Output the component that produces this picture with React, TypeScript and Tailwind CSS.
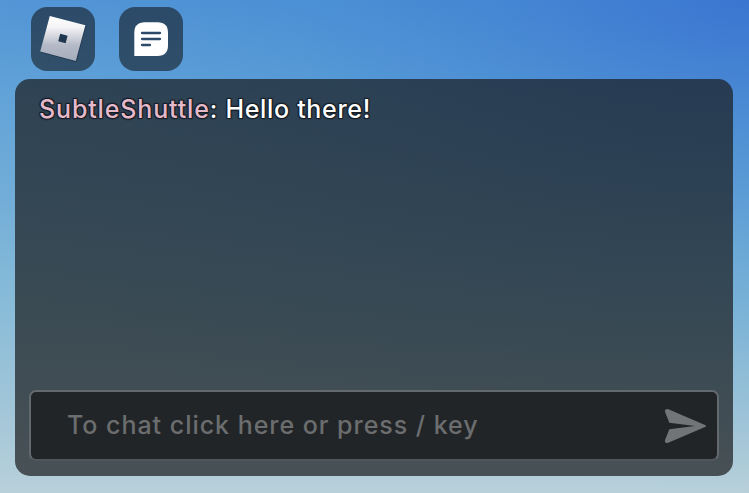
import React from "react";

function LogoButton() {
  return (
    <button aria-label="Menu" className="h-16 w-16 rounded-[16px] bg-[#0c0e10]/55">
      <svg width="64" height="64" viewBox="0 0 64 64">
        <defs>
          <linearGradient id="silver" x1="0" y1="0" x2="0" y2="1">
            <stop offset="0" stopColor="#ffffff" />
            <stop offset="0.25" stopColor="#f4f4f6" />
            <stop offset="0.65" stopColor="#b4bac6" />
            <stop offset="1" stopColor="#a5adbd" />
          </linearGradient>
        </defs>
        <path d="M19.4 9.9 55 19.2 45.4 54.9 9.8 45.5Z" fill="#13263a" opacity="0.55" />
        <path
          fillRule="evenodd"
          fill="url(#silver)"
          d="M18.8 9 54.4 18.3 44.8 53.9 9.2 44.5ZM29.2 26.8 27.2 34.2 34.6 36.2 36.6 28.7Z"
        />
      </svg>
    </button>
  );
}

function ChatButton() {
  return (
    <button aria-label="Chat" className="h-16 w-16 rounded-[16px] bg-[#0c0e10]/55">
      <svg width="64" height="64" viewBox="0 0 64 64">
        <path
          fill="#fff"
          d="M26 15.3H38.5Q49 15.3 49 25.8V38.3Q49 49 38.5 49H15.3V25.8Q15.3 15.3 26 15.3Z"
        />
        <path
          d="M23 26H41M23 32H41M23 38H31"
          stroke="#2d4a69"
          strokeWidth="2.3"
          strokeLinecap="round"
        />
      </svg>
    </button>
  );
}

export default function App() {
  return (
    <div className="flex h-[493px] w-[749px] flex-col overflow-hidden bg-[radial-gradient(900px_493px_at_749px_0px,rgba(48,104,207,0.7)_0%,rgba(44,114,207,0.4)_30%,rgba(40,124,207,0.22)_51%,rgba(40,130,207,0.1)_73%,rgba(40,130,207,0)_100%),linear-gradient(180deg,#5696d6_0px,#66a5d8_100px,#75afd8_200px,#87bbd8_300px,#a0c5d8_400px,#b8d0da_493px)] px-[15px] pt-[7px] font-['Inter',sans-serif]">
      <header className="flex gap-6 pl-4">
        <LogoButton />
        <ChatButton />
      </header>
      <main className="mt-2 flex h-[397px] w-[718px] flex-col justify-between rounded-[15px] bg-[#191b1d]/70 px-[14px] pt-[14px] pb-[15px]">
        <p className="pl-[10px] text-[25px] leading-8 font-medium whitespace-nowrap text-white [text-shadow:-1px_-1px_1px_#151c24,1px_-1px_1px_#151c24,-1px_1px_1px_#151c24,1px_1px_1px_#151c24]">
          <span className="tracking-[0.85px] text-[#e5b9c9]">SubtleShuttle</span>
          <span className="tracking-[0.68px]">: Hello there!</span>
        </p>
        <div className="flex h-[71px] w-[690px] items-center justify-between rounded-[7px] border-2 border-[#626a70] border-b-[#4f575c] bg-[#222527] pr-[10px] pl-[36px]">
          <span className="-mt-px text-[25px] leading-8 font-medium tracking-[0.97px] whitespace-nowrap text-[#6b6d6f]">
            To chat click here or press / key
          </span>
          <svg width="44" height="36" viewBox="0 0 44 36" aria-label="Send">
            <path
              fill="#717577"
              d="M3.1 1.3Q1.6 2 2 3.8L6.3 14.7 32 18 6.3 21.3 2 32.1Q1.4 34 2.8 34.7 4 35.2 5.2 34.7L42.6 18.8Q43.5 18 42.6 17.3L5.4 1.3Q4.1 .8 3.1 1.3Z"
            />
          </svg>
        </div>
      </main>
    </div>
  );
}
